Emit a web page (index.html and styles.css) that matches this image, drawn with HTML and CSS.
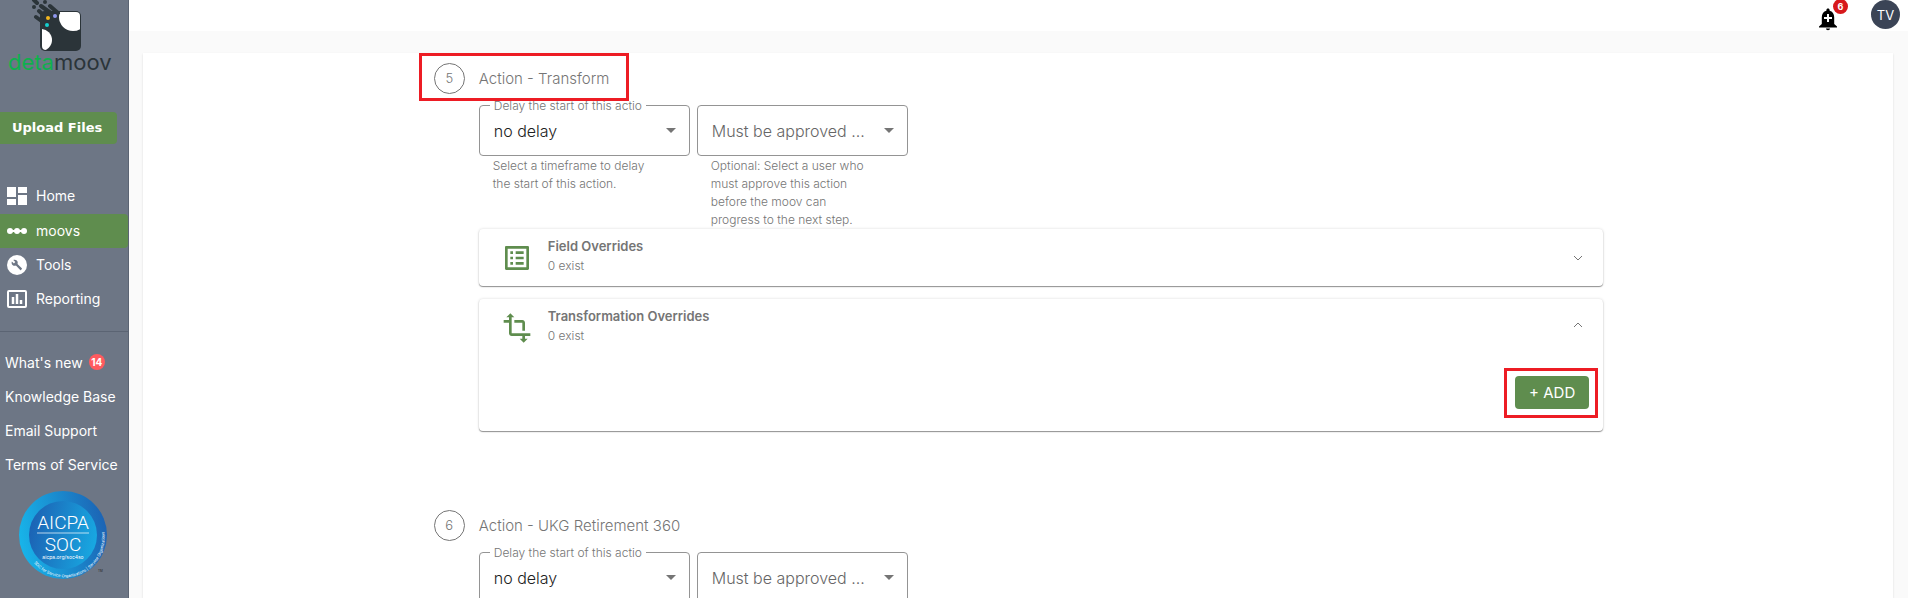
FILE: index.html
```
<!DOCTYPE html>
<html lang="en">
<head>
    <meta charset="UTF-8">
    <meta name="viewport" content="width=device-width, initial-scale=1.0">
    <title>detamoov</title>
    <link rel="stylesheet" href="styles.css">
</head>
<body>
    <aside class="sidebar">
        <svg class="logo" width="128" height="80" viewBox="0 0 128 80" role="img" aria-label="detamoov">
            <defs>
                <clipPath id="tile"><rect x="42" y="12" width="38" height="38" rx="4"></rect></clipPath>
            </defs>
            <rect x="40" y="11" width="41" height="40" rx="5" fill="#2b3439"></rect>
            <g clip-path="url(#tile)" fill="#fff">
                <circle cx="73" cy="17" r="14"></circle>
                <circle cx="41" cy="40" r="11"></circle>
            </g>
            <path d="M36 17l11 8M39 11l9 8M34 0l3 3M41 6l14 10M50 6l8 7M34 7h0M45 2h0" fill="none" stroke="#2b3439" stroke-width="4" stroke-linecap="round"></path>
            <circle cx="47" cy="25" r="2" fill="#15cfcf"></circle>
            <circle cx="48" cy="18" r="2" fill="#f3b61f"></circle>
            <circle cx="55" cy="16" r="2" fill="#8f97ee"></circle>
            <text class="logo-text" x="8" y="70"><tspan fill="#0fb04d">deta</tspan><tspan fill="#2b3439">moov</tspan></text>
        </svg>

        <button class="upload-btn">Upload Files</button>

        <nav class="main-nav">
            <a class="nav-link home" href="#">
                <svg width="20" height="20" viewBox="0 0 20 20" fill="currentColor">
                    <path d="M0 1h9v10H0zM11 1h9v6h-9zM0 13h9v6H0zM11 9h9v10h-9z"></path>
                </svg>
                <span>Home</span>
            </a>
            <a class="nav-link active" href="#">
                <svg width="20" height="20" viewBox="0 0 20 20" fill="currentColor">
                    <circle cx="3" cy="10" r="3"></circle>
                    <circle cx="10" cy="10" r="3"></circle>
                    <circle cx="17" cy="10" r="3"></circle>
                    <path d="M2 9h16v2H2z"></path>
                </svg>
                <span>moovs</span>
            </a>
            <a class="nav-link" href="#">
                <svg width="20" height="20" viewBox="0 0 20 20">
                    <circle cx="10" cy="10" r="10" fill="currentColor"></circle>
                    <path d="M14.800 13.300l-4.300-4.300c.5-1.200.2-2.500-.7-3.400-.9-.9-2.300-1.100-3.500-.6l2 2-1.400 1.400-2-2c-.6 1.200-.3 2.600.6 3.500.9.900 2.300 1.200 3.400.7l4.300 4.300c.3.300.6.300.8 0l.8-.8c.3-.2.3-.6 0-.8z" fill="#6d7685"></path>
                </svg>
                <span>Tools</span>
            </a>
            <a class="nav-link" href="#">
                <svg width="20" height="20" viewBox="0 0 20 20" fill="none" stroke="currentColor" stroke-width="2">
                    <rect x="1" y="2" width="18" height="16" rx="1"></rect>
                    <path d="M6 8v7M10 5v10M14 11v4" stroke-width="2.500"></path>
                </svg>
                <span>Reporting</span>
            </a>
        </nav>

        <nav class="help-nav">
            <a class="help-link" href="#">What's new <span class="count">14</span></a>
            <a class="help-link" href="#">Knowledge Base</a>
            <a class="help-link" href="#">Email Support</a>
            <a class="help-link" href="#">Terms of Service</a>
        </nav>

        <svg class="soc" width="90" height="90" viewBox="0 0 90 90" role="img" aria-label="AICPA SOC">
            <defs>
                <linearGradient id="ring" x1="0" y1="0.600" x2="1" y2="0.400">
                    <stop offset="0" stop-color="#18b5ea"></stop>
                    <stop offset="1" stop-color="#1c63b4"></stop>
                </linearGradient>
                <linearGradient id="disc" x1="0" y1="0.400" x2="1" y2="0.600">
                    <stop offset="0" stop-color="#1c62b4"></stop>
                    <stop offset="1" stop-color="#18a9e2"></stop>
                </linearGradient>
                <path id="arc" d="M16 73A40 40 0 0 0 84 33"></path>
            </defs>
            <circle cx="45" cy="45" r="44" fill="url(#ring)"></circle>
            <circle cx="45" cy="45" r="34" fill="url(#disc)"></circle>
            <text class="soc-title" x="45" y="39">AICPA</text>
            <path d="M19 43h52" stroke="#fff" stroke-width="0.700"></path>
            <text class="soc-title" x="45" y="61">SOC</text>
            <text class="soc-url" x="45" y="69">aicpa.org/soc4so</text>
            <text class="soc-arc"><textPath href="#arc">SOC for Service Organizations | Service Organizations</textPath></text>
            <text class="soc-tm" x="80" y="82">TM</text>
        </svg>
    </aside>

    <div class="page">
        <header class="topbar">
            <button class="bell" aria-label="Notifications">
                <svg width="24" height="24" viewBox="0 0 24 24">
                    <path d="M12 1.500c-1 0-1.600.7-1.600 1.600v.6C7.500 4.400 5.800 7 5.800 10.200V17L3 19.500v1h18v-1L18.200 17v-6.800c0-3.200-1.700-5.800-4.600-6.500v-.6c0-.9-.6-1.600-1.600-1.600zM10 21.500h4c0 1-.9 1.700-2 1.700s-2-.7-2-1.700z" fill="#000"></path>
                    <path d="M12 7v8M8 11h8" stroke="#fff" stroke-width="2"></path>
                </svg>
                <span class="bell-count">6</span>
            </button>
            <button class="avatar">TV</button>
        </header>

        <main class="sheet">
            <div class="steps">
                <section class="step">
                    <div class="step-head highlight">
                        <span class="step-number">5</span>
                        <h2 class="step-title">Action - Transform</h2>
                    </div>
                    <div class="step-body">
                        <div class="fields">
                            <div class="field">
                                <div class="select-box">
                                    <label class="float-label" for="delay5"><span>Delay the start of this action</span></label>
                                    <select id="delay5"><option>no delay</option></select>
                                    <svg class="arrow" width="10" height="5" viewBox="0 0 10 5"><path d="M0 0h10L5 5z"></path></svg>
                                </div>
                                <p class="hint">Select a timeframe to delay the start of this action.</p>
                            </div>
                            <div class="field">
                                <div class="select-box">
                                    <select id="approver5" class="empty" aria-label="Must be approved by"><option>Must be approved ...</option></select>
                                    <svg class="arrow" width="10" height="5" viewBox="0 0 10 5"><path d="M0 0h10L5 5z"></path></svg>
                                </div>
                                <p class="hint">Optional: Select a user who must approve this action before the moov can progress to the next step.</p>
                            </div>
                        </div>

                        <div class="panel">
                            <button class="panel-head">
                                <svg class="panel-icon" width="32" height="32" viewBox="0 0 24 24" fill="#5f8d4e">
                                    <path d="M11 7h6v2h-6zm0 4h6v2h-6zm0 4h6v2h-6zM7 7h2v2H7zm0 4h2v2H7zm0 4h2v2H7zM20.100 3H3.900c-.5 0-.9.4-.9.9v16.200c0 .4.4.9.9.9h16.200c.4 0 .9-.5.9-.9V3.900c0-.5-.5-.9-.9-.9zM19 19H5V5h14v14z"></path>
                                </svg>
                                <span class="panel-text">
                                    <strong>Field Overrides</strong>
                                    <span>0 exist</span>
                                </span>
                                <svg class="chevron" width="10" height="6" viewBox="0 0 10 6"><path d="M1 1l4 4 4-4"></path></svg>
                            </button>
                        </div>

                        <div class="panel open">
                            <button class="panel-head">
                                <svg class="panel-icon" width="32" height="32" viewBox="0 0 24 24" fill="#5f8d4e">
                                    <path d="M22 18v-2H8V4h2L7 1 4 4h2v2H2v2h4v8c0 1.100.9 2 2 2h8v2h-2l3 3 3-3h-2v-2h4zM10 8h6v6h2V8c0-1.100-.9-2-2-2h-6v2z"></path>
                                </svg>
                                <span class="panel-text">
                                    <strong>Transformation Overrides</strong>
                                    <span>0 exist</span>
                                </span>
                                <svg class="chevron" width="10" height="6" viewBox="0 0 10 6"><path d="M1 5l4-4 4 4"></path></svg>
                            </button>
                            <div class="panel-actions">
                                <div class="add-frame highlight">
                                    <button class="add-btn">+ ADD</button>
                                </div>
                            </div>
                        </div>
                    </div>
                </section>

                <section class="step">
                    <div class="step-head">
                        <span class="step-number">6</span>
                        <h2 class="step-title">Action - UKG Retirement 360</h2>
                    </div>
                    <div class="step-body">
                        <div class="fields">
                            <div class="field">
                                <div class="select-box">
                                    <label class="float-label" for="delay6"><span>Delay the start of this action</span></label>
                                    <select id="delay6"><option>no delay</option></select>
                                    <svg class="arrow" width="10" height="5" viewBox="0 0 10 5"><path d="M0 0h10L5 5z"></path></svg>
                                </div>
                            </div>
                            <div class="field">
                                <div class="select-box">
                                    <select id="approver6" class="empty" aria-label="Must be approved by"><option>Must be approved ...</option></select>
                                    <svg class="arrow" width="10" height="5" viewBox="0 0 10 5"><path d="M0 0h10L5 5z"></path></svg>
                                </div>
                            </div>
                        </div>
                    </div>
                </section>
            </div>
        </main>
    </div>
</body>
</html>
```
FILE: styles.css
```
* {
    margin: 0;
    padding: 0;
    box-sizing: border-box;
}

body {
    display: flex;
    height: 100vh;
    overflow: hidden;
    font-family: Inter, "Open Sans", sans-serif;
    font-size: 14px;
    color: #757575;
    background: #fafafa;
}

button {
    font: inherit;
    border: none;
    cursor: pointer;
}

/* sidebar */
.sidebar {
    flex: 0 0 129px;
    display: flex;
    flex-direction: column;
    align-items: flex-start;
    background: #6d7685;
    border-right: 1px solid #5b6473;
    color: #fff;
    overflow: hidden;
}

.logo {
    flex: none;
}

.logo-text {
    font-size: 22px;
    font-weight: 400;
}

.upload-btn {
    margin-top: 32px;
    height: 32px;
    padding: 1px 15px 3px 12px;
    background: #5f8d4e;
    border-radius: 0 4px 4px 0;
    color: #fff;
    font-family: "DejaVu Sans", sans-serif;
    font-size: 13px;
    font-weight: bold;
}

.main-nav {
    width: 100%;
    margin-top: 36px;
    padding-bottom: 15px;
    border-bottom: 1px solid #5b6473;
}

.nav-link {
    display: flex;
    align-items: center;
    gap: 9px;
    height: 34px;
    padding-left: 7px;
    color: #fff;
    font-size: 14px;
    text-decoration: none;
}

.nav-link span {
    padding-bottom: 2px;
}

.nav-link.home {
    padding-bottom: 2px;
}

.nav-link.active {
    background: #5f8d4e;
    border-radius: 0 4px 4px 0;
}

.help-nav {
    display: flex;
    flex-direction: column;
    margin-top: 13px;
    padding-left: 5px;
}

.help-link {
    display: flex;
    align-items: center;
    gap: 6px;
    height: 34px;
    color: #fff;
    font-size: 14px;
    text-decoration: none;
    white-space: nowrap;
}

.count {
    width: 16px;
    height: 16px;
    border-radius: 50%;
    background: #ff5a5f;
    font-size: 10px;
    font-weight: bold;
    line-height: 16px;
    text-align: center;
}

.soc {
    flex: none;
    margin: 9px 0 0 18px;
}

.soc text {
    fill: #fff;
}

.soc-title {
    font-family: Roboto, sans-serif;
    font-size: 19px;
    font-weight: 300;
    text-anchor: middle;
}

.soc-url {
    font-size: 5px;
    text-anchor: middle;
}

.soc-arc {
    font-size: 4px;
}

.soc .soc-tm {
    font-size: 3px;
    fill: #222;
}

/* page */
.page {
    flex: 1;
    display: flex;
    flex-direction: column;
    min-width: 0;
}

.topbar {
    display: flex;
    justify-content: flex-end;
    gap: 31px;
    flex: 0 0 31px;
    padding-right: 8px;
    background: #fff;
}

.bell {
    position: relative;
    align-self: flex-end;
    height: 24px;
    background: none;
}

.bell-count {
    position: absolute;
    top: -8px;
    right: -8px;
    width: 15px;
    height: 15px;
    border-radius: 50%;
    background: #d7191c;
    color: #fff;
    font-size: 9px;
    font-weight: bold;
    line-height: 15px;
}

.avatar {
    width: 29px;
    height: 29px;
    border-radius: 50%;
    background: #3b4456;
    color: #fff;
    font-size: 13px;
}

.sheet {
    flex: 1;
    min-height: 0;
    margin: 22px 15px 0 14px;
    background: #fff;
    box-shadow: 0 1px 2px rgba(0, 0, 0, 0.12);
    overflow: hidden;
}

.steps {
    width: 67%;
    margin: 0 auto;
    padding: 0 1px;
}

.step {
    margin-bottom: 69px;
}

.step-head {
    position: relative;
    z-index: 1;
    display: inline-flex;
    align-items: center;
    gap: 14px;
    height: 48px;
    margin-left: -14px;
    padding: 3px 20px 0 15px;
    vertical-align: top;
}

.highlight {
    outline: 3px solid #ed1c24;
    outline-offset: -3px;
}

.step-number {
    width: 31px;
    height: 31px;
    border: 1px solid #757575;
    border-radius: 50%;
    font-size: 13px;
    font-weight: 300;
    line-height: 29px;
    text-align: center;
}

.step-title {
    font-size: 15px;
    font-weight: 300;
}

.step-body {
    padding-left: 46px;
}

.fields {
    display: flex;
    gap: 7px;
    padding-top: 4px;
}

.field {
    flex: 0 0 211px;
    min-width: 0;
}

.select-box {
    position: relative;
}

.select-box select {
    display: block;
    width: 100%;
    height: 51px;
    padding: 0 32px 0 14px;
    appearance: none;
    background: #fff;
    border: 1px solid #949494;
    border-radius: 4px;
    color: #212121;
    font: inherit;
    font-size: 16px;
    font-weight: 300;
}

.select-box .empty {
    color: #666;
}

.float-label {
    position: absolute;
    top: -6px;
    left: 11px;
    padding: 0 4px;
    background: #fff;
    font-size: 12px;
    font-weight: 300;
    line-height: 14px;
}

.float-label span {
    display: block;
    width: 148px;
    overflow: hidden;
    white-space: nowrap;
}

.arrow {
    position: absolute;
    top: 23px;
    right: 14px;
    fill: #757575;
    pointer-events: none;
}

.hint {
    padding: 1px 32px 0 14px;
    font-size: 12px;
    font-weight: 300;
    line-height: 18px;
}

.panel {
    margin-bottom: 13px;
    background: #fff;
    border-radius: 4px;
    box-shadow: 0 1px 1px rgba(0, 0, 0, 0.4), 0 0 3px rgba(0, 0, 0, 0.15);
}

.panel-head {
    display: flex;
    align-items: center;
    width: 100%;
    height: 57px;
    padding: 0 20px 0 22px;
    background: none;
    color: #757575;
    text-align: left;
}

.panel-text {
    display: flex;
    flex: 1;
    flex-direction: column;
    padding: 0 0 3px 15px;
    font-size: 12px;
    font-weight: 300;
    line-height: 20px;
}

.panel-text strong {
    font-size: 13px;
    font-weight: 600;
}

.chevron {
    fill: none;
    stroke: #757575;
}

.open .chevron {
    margin-bottom: 6px;
}

.panel-actions {
    display: flex;
    justify-content: flex-end;
    padding: 12px 5px 13px;
}

.add-frame {
    padding: 8px 9px 9px 11px;
}

.add-btn {
    height: 33px;
    padding: 0 14px;
    background: #5f8d4e;
    border-radius: 4px;
    color: #fff;
    font-size: 15px;
}
```
